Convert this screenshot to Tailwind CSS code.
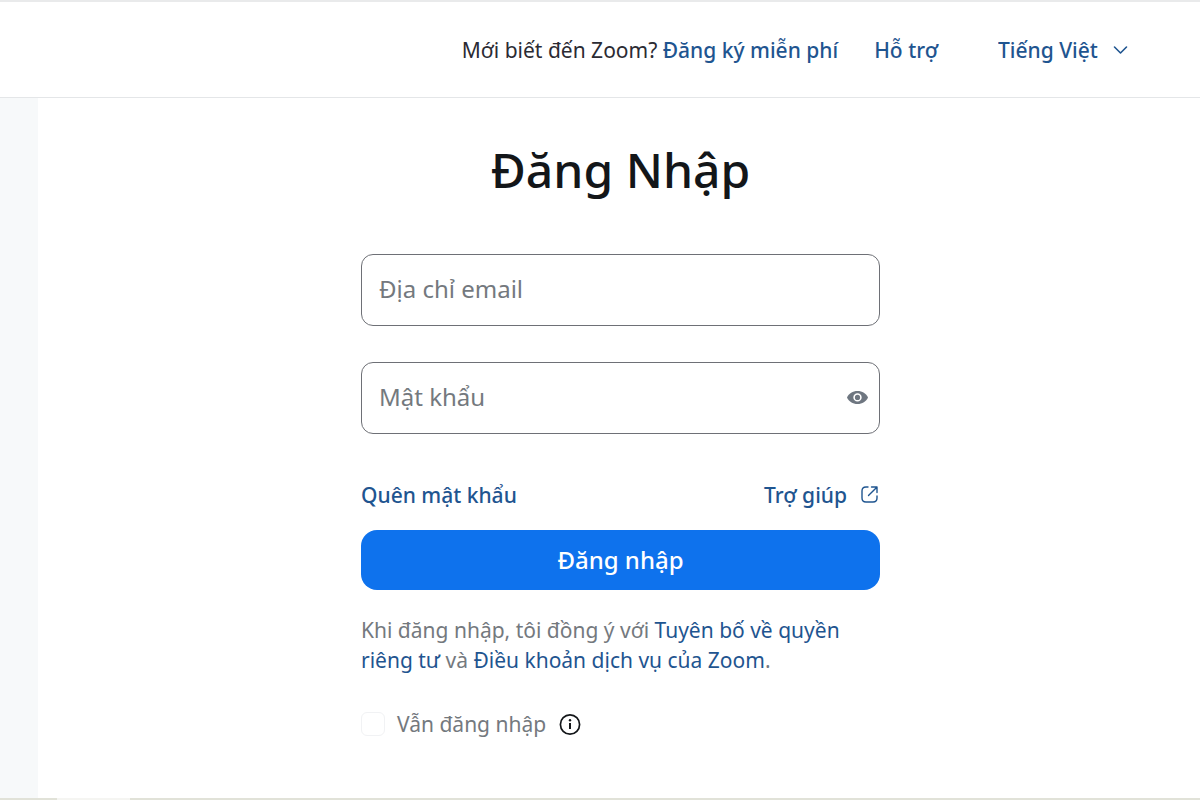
<!DOCTYPE html>
<html lang="vi">
<head>
  <meta charset="utf-8">
  <meta name="viewport" content="width=device-width, initial-scale=1">
  <title>Đăng Nhập - Zoom</title>
  <script src="https://cdn.jsdelivr.net/npm/@tailwindcss/browser@4"></script>
</head>
<body class="flex min-h-screen flex-col bg-white font-['Noto_Sans',sans-serif] text-[21px] leading-[30px] text-[#74797e]">

  <header class="flex h-[98px] items-center justify-end border-t-2 border-b border-t-[#e9eaeb] border-b-[#e4e6e8] pr-[72px]">
    <p class="mr-9 text-[#2b2b33]">
      Mới biết đến Zoom?
      <a href="#" class="font-medium text-[#1f5590]">Đăng ký miễn phí</a>
    </p>
    <a href="#" class="mr-[60px] font-medium text-[#1f5590]">Hỗ trợ</a>
    <div class="relative flex items-center text-[#1f5590]">
      <select aria-label="Ngôn ngữ" class="appearance-none bg-transparent pr-[30px] font-medium">
        <option>Tiếng Việt</option>
      </select>
      <svg class="pointer-events-none absolute right-0 h-4 w-4" viewBox="0 0 16 16" fill="none" stroke="currentColor" stroke-width="1.6" stroke-linecap="round" stroke-linejoin="round">
        <path d="M2.500 5 8.500 11 14.500 5"/>
      </svg>
    </div>
  </header>

  <div class="flex grow">
    <aside class="w-[38px] shrink-0 bg-[#f7f9fa]"></aside>

    <main class="grow pt-[42px] pl-[3px]">
      <form class="mx-auto max-w-[519px]">
        <h1 class="text-center text-[48px] leading-[60px] font-medium text-[#131619]">Đăng Nhập</h1>

        <input type="email" aria-label="Địa chỉ email" placeholder="Địa chỉ email" class="mt-[54px] block h-[72px] w-full rounded-xl border border-[#6e7076] px-[17px] pb-1 text-2xl text-[#131619] placeholder:text-[#74797e]">

        <div class="relative mt-9">
          <input type="password" aria-label="Mật khẩu" placeholder="Mật khẩu" class="block h-[72px] w-full rounded-xl border border-[#6e7076] pr-12 pb-1 pl-[17px] text-2xl text-[#131619] placeholder:text-[#74797e]">
          <button type="button" aria-label="Hiện mật khẩu" class="absolute inset-y-0 right-3 text-[#6e7680]">
            <svg class="h-[22px] w-[22px]" viewBox="0 0 22 22">
              <path fill="currentColor" d="M11.500 4C6.700 4 2.800 6.600 1 10.400c1.800 3.900 5.700 6.600 10.500 6.600s8.700-2.700 10.500-6.600C20.200 6.600 16.300 4 11.500 4z"/>
              <circle cx="11.500" cy="10.400" r="3.400" fill="none" stroke="#fff" stroke-width="1.600"/>
            </svg>
          </button>
        </div>

        <div class="mt-[46px] flex items-center justify-between font-medium text-[#1f5590]">
          <a href="#">Quên mật khẩu</a>
          <a href="#" class="flex items-center gap-[13px]">
            Trợ giúp
            <svg class="h-5 w-5" viewBox="0 0 20 20" fill="none" stroke="currentColor" stroke-width="1.400" stroke-linecap="round" stroke-linejoin="round">
              <path d="M8 2H6Q2 2 2 6v7q0 4 4 4h7q4 0 4-4v-2"/>
              <path d="M11.500 2H17v5.500M16.800 2.200 8.500 10.500"/>
            </svg>
          </a>
        </div>

        <button type="submit" class="mt-5 h-[60px] w-full rounded-2xl bg-[#0e72ed] text-2xl font-medium text-white">Đăng nhập</button>

        <p class="mt-[25px]">
          Khi đăng nhập, tôi đồng ý với <a href="#" class="text-[#1f5590]">Tuyên bố về quyền riêng tư</a> và <a href="#" class="text-[#1f5590]">Điều khoản dịch vụ của Zoom</a>.
        </p>

        <div class="mt-[34px] flex items-center">
          <input type="checkbox" id="stay" class="h-6 w-6 appearance-none rounded-md border border-[#f1f2f4] bg-white checked:bg-[#0e72ed]">
          <label for="stay" class="ml-3">Vẫn đăng nhập</label>
          <button type="button" aria-label="Thông tin" class="ml-3 text-[#131619]">
            <svg class="h-6 w-6" viewBox="0 0 24 24" fill="none" stroke="currentColor">
              <circle cx="12" cy="12.500" r="9.600" stroke-width="1.700"/>
              <path d="M12 11v6" stroke-width="2"/>
              <circle cx="12" cy="8.300" r="1.200" fill="currentColor" stroke="none"/>
            </svg>
          </button>
        </div>
      </form>
    </main>
  </div>

  <footer class="flex h-0.5">
    <div class="w-[57px] bg-[#e1e2d8]"></div>
    <div class="w-[73px] bg-[#f5f5f2]"></div>
    <div class="grow bg-[#e1e2d8]"></div>
  </footer>

</body>
</html>
